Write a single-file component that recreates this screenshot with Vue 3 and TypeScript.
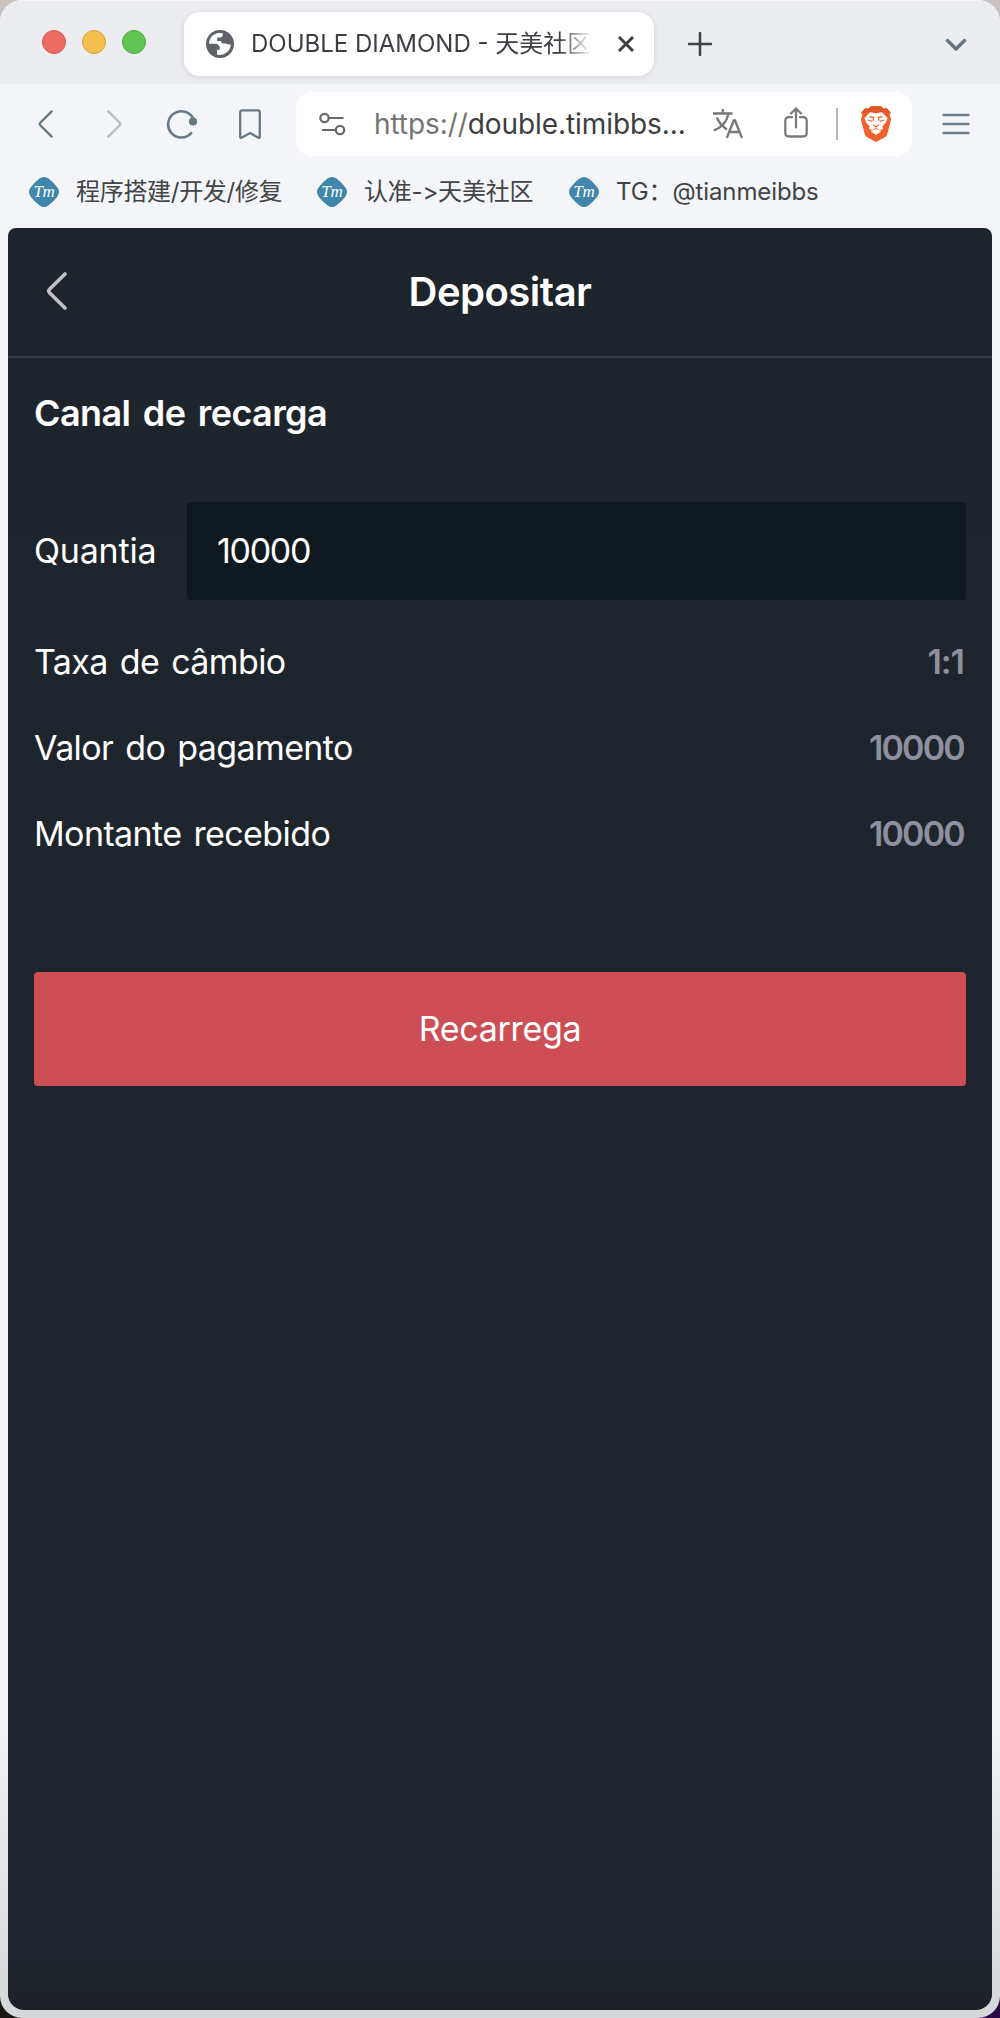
<script setup lang="ts">
import { ref } from 'vue'

interface Bookmark { label: string; handle?: string; kind: string }
interface Row { label: string; value: string; kind: string }

const amount = ref('10000')
const bookmarks: Bookmark[] = [
  { label: '程序搭建/开发/修复', kind: 'bm-a' },
  { label: '认准->天美社区', kind: 'bm-b' },
  { label: 'TG：', handle: '@tianmeibbs', kind: 'bm-c' },
]
const rows: Row[] = [
  { label: 'Taxa de câmbio', value: '1:1', kind: 'rate' },
  { label: 'Valor do pagamento', value: '10000', kind: 'pay' },
  { label: 'Montante recebido', value: '10000', kind: 'receive' },
]
</script>

<template>
  <div class="desktop">
    <div class="window">
      <div class="tabstrip">
        <div class="lights"><i class="red"></i><i class="yellow"></i><i class="green"></i></div>
        <div class="tab">
          <svg class="globe" width="28" height="28" viewBox="0 0 28 28">
            <circle cx="14" cy="14" r="14" fill="#5f6368" />
            <path d="M13.2 3C7.400 3.200 3 7.900 3 13.700h6.300c2.700 0 4.500 1.700 4.500 4.100v2H11v4.800c6.400 1.500 13.600-3 13.800-10.200h-1.900c-1.300 0-2.200-.9-3.200-.9h-2.300c-1.500 0-2.300-1-2.300-2.400h-3.900V7.400h2.900c1.700 0 2.600-1 2.600-2.200V3.100z" fill="#fff" />
          </svg>
          <div class="tab-title"><span class="tab-latin">DOUBLE DIAMOND - </span>天美社区</div>
          <svg class="close" width="18" height="18" viewBox="0 0 18 18"><path d="M2 2l14 14M16 2L2 16" stroke="#3b3f42" stroke-width="3" fill="none" /></svg>
        </div>
        <svg class="plus" width="24" height="24" viewBox="0 0 24 24"><path d="M12 1v22M1 12h22" stroke="#3f4245" stroke-width="2.600" stroke-linecap="round" /></svg>
        <svg class="chevron" width="22" height="14" viewBox="0 0 22 14"><path d="M2.500 2.500L11 11l8.500-8.500" fill="none" stroke="#677681" stroke-width="3.400" stroke-linecap="round" stroke-linejoin="round" /></svg>
      </div>

      <div class="toolbar">
        <svg class="nav-back" width="16" height="28" viewBox="0 0 16 28"><path d="M13.700 1.400L2.500 12.500q-1.500 1.500 0 3L13.700 26.600" fill="none" stroke="#647682" stroke-width="2.300" stroke-linecap="round" /></svg>
        <svg class="nav-forward" width="16" height="28" viewBox="0 0 16 28"><path d="M2.300 1.400L13.500 12.500q1.500 1.500 0 3L2.300 26.600" fill="none" stroke="#b5bec3" stroke-width="2.300" stroke-linecap="round" /></svg>
        <svg class="reload" width="32" height="30" viewBox="0 0 32 30">
          <path d="M27.400 10A13.200 13.200 0 1 0 25.200 24.200" fill="none" stroke="#677985" stroke-width="2.500" stroke-linecap="round" />
          <circle cx="27" cy="12.500" r="4.100" fill="#677985" />
        </svg>
        <svg class="mark" width="22" height="31" viewBox="0 0 22 31"><path d="M3.500 1.300h15q2.300 0 2.300 2.300v24.200q0 1.600-1.400.9L11 24l-8.400 4.700q-1.400.7-1.400-.9V3.600q0-2.300 2.300-2.300z" fill="none" stroke="#677985" stroke-width="2.300" /></svg>
        <div class="address">
          <svg class="tune" width="27" height="24" viewBox="0 0 27 24"><g fill="none" stroke="#66696c" stroke-width="2.200"><circle cx="5.500" cy="6" r="4.200" /><path d="M10 6h14.500M3 18h13" /><circle cx="21" cy="18" r="4.200" /></g></svg>
          <div class="url"><span>https://</span>double.timibbs...</div>
          <svg class="translate" width="30" height="30" viewBox="0 0 30 30"><g fill="none" stroke="#777" stroke-width="2.300"><path d="M0 4.500h19.500M9.800 0v4.500M3.800 8.500c2.500 6.500 6.300 9.200 10.200 12M15.600 4.500C14 12 8.500 18.500.8 21.500" /><path d="M13.800 29l6.900-17.500h1.400L29 29M16.300 23h10.300" /></g></svg>
          <svg class="share" width="24" height="31" viewBox="0 0 24 31"><path d="M8 10.200H5q-3.700 0-3.700 3.700v11.900q0 3.700 3.700 3.700h14q3.700 0 3.700-3.700V13.900q0-3.700-3.700-3.700h-3M12 20.500V1.800M7 6.500l5-5 5 5" fill="none" stroke="#7c7c7c" stroke-width="2.300" stroke-linecap="round" /></svg>
          <i class="bar"></i>
          <svg class="brave" width="32" height="36" viewBox="0 0 32 36">
            <path d="M8.500 2.700L11 .2h10l2.500 2.500 3.200-.4 4 4.200-1 2.900 1.500 3.800-3.800 14.500q-.7 2.500-2.900 3.900L16 36l-8.500-4.400q-2.200-1.400-2.900-3.900L.8 13.200l1.500-3.800-1-2.900 4-4.200z" fill="#f0602c" />
            <path d="M8.500 2.700L11 .2h10l2.500 2.500 3.200-.4 4 4.200H1.300l4-4.200z" fill="#df5524" />
            <path d="M10 6.300l6 .9 6-.9 5.600 6-1.700 4.200-3.700 4 .9 2.200-2.900 1.600-4.200-2.300-4.200 2.300-2.900-1.600.9-2.200-3.700-4-1.700-4.200zM10.800 25.200l5.200-2.400 5.200 2.400L16 29z" fill="#fff" />
            <path d="M9.200 10.600l4.500.7-.7 3.500M22.800 10.600l-4.500.7.7 3.500M7.800 14l4.200 1.300M24.200 14L20 15.300M13 18.800l3 2 3-2M16 20.800v2.800" fill="none" stroke="#ef6a3b" stroke-width="1.300" />
          </svg>
        </div>
        <svg class="menu" width="28" height="22" viewBox="0 0 28 22"><path d="M1.500 2h25M1.500 11h25M1.500 20h25" stroke="#6c7e89" stroke-width="2.400" stroke-linecap="round" /></svg>
      </div>

      <div class="bookmarks">
        <div v-for="b in bookmarks" :key="b.label" class="bookmark" :class="b.kind">
          <div class="badge">
            <svg width="30" height="30" viewBox="0 0 30 30"><path d="M10.500 1.600q4.500-3.200 9 0 5 3.500 8.900 8.900 3.200 4.500 0 9-4 5.400-8.900 8.900-4.500 3.200-9 0-5-3.500-8.900-8.900-3.200-4.500 0-9 4-5.400 8.900-8.900z" fill="#4085ac" /></svg>
            <span>Tm</span>
          </div>
          <span class="bm-label">{{ b.label }}</span><span v-if="b.handle" class="handle">{{ b.handle }}</span>
        </div>
      </div>

      <main class="page">
        <header class="head">
          <svg class="back" width="22" height="38" viewBox="0 0 22 38"><path d="M19 2L3.500 17.300q-1.700 1.700 0 3.400L19 36" fill="none" stroke="#bfbfc5" stroke-width="3.600" stroke-linecap="round" /></svg>
          <h1>Depositar</h1>
        </header>
        <section class="content">
          <h2>Canal de recarga</h2>
          <label class="field"><span class="quantia">Quantia</span><input v-model="amount" type="text" /></label>
          <div v-for="r in rows" :key="r.label" class="row" :class="r.kind">
            <span class="row-label">{{ r.label }}</span><strong>{{ r.value }}</strong>
          </div>
          <button type="button">Recarrega</button>
        </section>
      </main>
    </div>
  </div>
</template>

<style>
body { background: #d6cfca; }
</style>

<style scoped>
* { box-sizing: border-box; }
svg { display: block; flex: none; }
.desktop {
  height: 2018px; overflow: hidden;
  background: linear-gradient(90deg, #1a1712 0 50%, #2b0a45 50%) bottom / 100% 100px no-repeat, #c9c1bd;
  font-family: Inter, "Noto Sans CJK SC", sans-serif;
}
.window {
  display: flex; flex-direction: column; height: 2018px; overflow: hidden;
  border-radius: 22px;
  background: linear-gradient(#f3f5f8 0 1700px, #d7d8da 2000px);
}
.tabstrip { display: flex; align-items: flex-start; height: 84px; background: #ecedf1; border-top: 1px solid #f8f8f9; flex: none; }
.lights { display: flex; gap: 16px; margin: 29px 0 0 42px; width: 142px; }
.lights i { width: 24px; height: 24px; border-radius: 50%; border: 1px solid #d9574c; background: #ed6b60; }
.lights .yellow { background: #f5bf4f; border-color: #d8a13b; }
.lights .green { background: #61c555; border-color: #4da93e; }
.tab { display: flex; align-items: center; width: 470px; height: 64px; margin-top: 11px; padding-left: 22px; border-radius: 16px; background: #fff; box-shadow: 0 1px 6px #0000001c; }
.tab-title {
  width: 341px; height: 36px; line-height: 35px; margin-left: 17px; overflow: hidden; white-space: nowrap;
  font-size: 24px; color: #3b3e43;
  -webkit-mask: linear-gradient(90deg, #000 308px, transparent 341px);
  mask: linear-gradient(90deg, #000 308px, transparent 341px);
}
.tab-latin { letter-spacing: 0; }
.close { margin-left: 25px; }
.plus { margin: 31px 0 0 34px; }
.chevron { margin: 37px 0 0 233px; }
.toolbar { display: flex; align-items: center; height: 80px; flex: none; }
.nav-back { margin-left: 38px; }
.nav-forward { margin-left: 52px; }
.reload { margin-left: 44px; }
.mark { margin-left: 41px; }
.address { display: flex; align-items: center; width: 616px; height: 64px; margin-left: 35px; border-radius: 16px; background: #fff; }
.tune { margin-left: 23px; }
.url { width: 314px; margin-left: 28px; font-size: 28px; line-height: 36px; letter-spacing: -0.08px; white-space: nowrap; color: #3b3e40; }
.url span { color: #747474; }
.translate { margin-left: 25px; }
.share { margin-left: 41px; margin-top: -3px; }
.bar { width: 2px; height: 32px; margin-left: 28px; background: #b5b5b5; }
.brave { margin-left: 22px; }
.menu { margin-left: 30px; }
.bookmarks { display: flex; height: 64px; padding: 13px 0 0 29px; flex: none; }
.bookmark { display: flex; align-items: flex-start; height: 30px; font-size: 24px; line-height: 30px; color: #414345; white-space: nowrap; }
.badge { display: grid; width: 30px; height: 30px; margin-right: 17px; flex: none; }
.badge > * { grid-area: 1 / 1; }
.badge span { z-index: 1; text-align: center; font: italic 17px/30px "Liberation Serif", serif; color: #fff; }
.bm-a { width: 288px; letter-spacing: -0.3px; }
.bm-b { width: 252px; font-feature-settings: "calt" 0; letter-spacing: -0.2px; }
.bm-c { letter-spacing: -0.1px; }
.page { display: flex; flex-direction: column; height: 1782px; margin: 0 8px; border-radius: 8px 8px 16px 16px; background: linear-gradient(#1e242c, #1e252c 1720px, #1d2027 1782px); color: #fff; overflow: hidden; flex: none; }
.head { display: flex; align-items: center; height: 130px; padding: 0 38px 2px; border-bottom: 2px solid #333a44; flex: none; }
.head h1 { flex: 1; margin: 2px 22px 0 0; text-align: center; font-size: 40px; line-height: 50px; font-weight: 600; letter-spacing: -0.5px; }
.content { display: flex; flex-direction: column; padding: 29px 26px 0; font-size: 34px; }
h2 { margin: 0 0 63px; font-size: 36px; line-height: 52px; font-weight: 600; white-space: nowrap; letter-spacing: -0.6px; word-spacing: 4px; }
.field { display: flex; align-items: center; height: 98px; margin-bottom: 20px; }
.quantia { width: 153px; padding-bottom: 2px; white-space: nowrap; letter-spacing: -0.2px; }
input { width: 779px; height: 98px; padding: 0 28px 2px 30px; border: 0; border-radius: 4px; outline: 0; background: #111920; color: #fff; font: 400 34px Inter, sans-serif; letter-spacing: -1.300px; }
.row { display: flex; justify-content: space-between; align-items: center; height: 86px; padding-bottom: 3px; white-space: nowrap; letter-spacing: -0.6px; word-spacing: 3px; }
.row strong { font-weight: 600; color: #8e8f9f; letter-spacing: -1.800px; padding-right: 2px; }
.row.rate strong { letter-spacing: -1px; }
button { height: 114px; margin-top: 94px; padding: 0 0 2px; border: 0; border-radius: 4px; background: #cd4e55; color: #fff; font: 400 34px Inter, sans-serif; letter-spacing: -0.3px; }
</style>
